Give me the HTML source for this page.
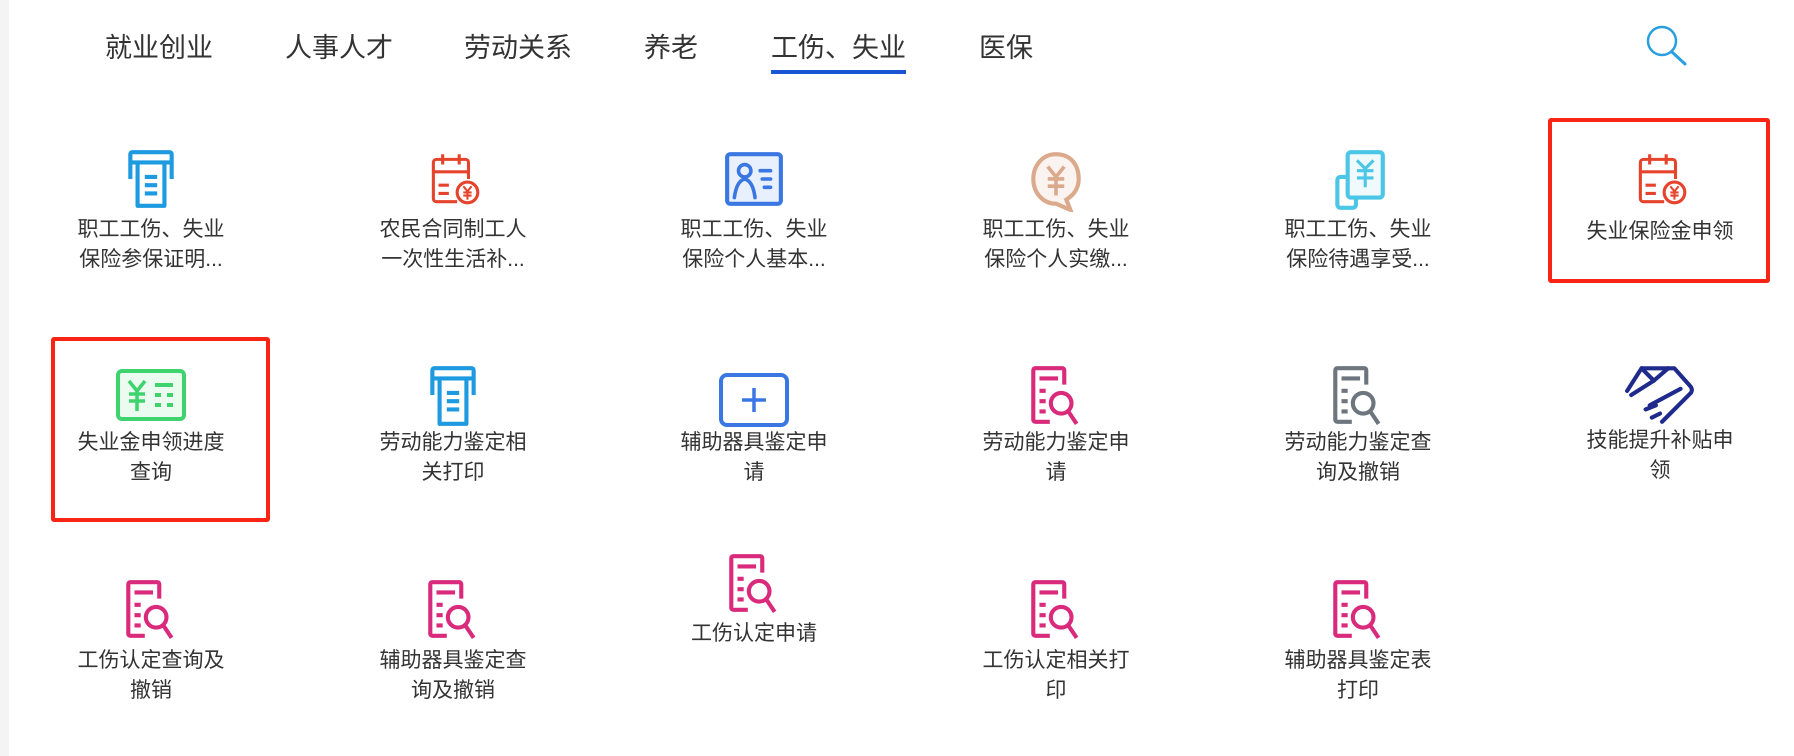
<!DOCTYPE html>
<html><head><meta charset="utf-8"><style>
*{margin:0;padding:0;box-sizing:border-box}
body{width:1794px;height:756px;background:#fff;position:relative;overflow:hidden;font-family:"Liberation Sans","Noto Sans CJK SC",sans-serif;color:#333}
.strip{position:absolute;left:0;top:0;width:9px;height:756px;background:#f4f4f4}
.nav{position:absolute;top:30px;font-size:27px;color:#333;line-height:36px;white-space:nowrap}
.ul{position:absolute;left:771px;top:70px;width:135px;height:4px;background:#1a55d6}
.it{position:absolute;width:300px;text-align:center}
.it svg{display:block;margin:0 auto}
.t{font-size:21px;line-height:30px;color:#333;margin-top:8px}
.box{position:absolute;border:4px solid #fa2414;border-radius:3px}
</style></head><body>
<div class="strip"></div>
<div class="nav" style="left:105px">就业创业</div>
<div class="nav" style="left:285px">人事人才</div>
<div class="nav" style="left:464px">劳动关系</div>
<div class="nav" style="left:644px">养老</div>
<div class="nav" style="left:771px">工伤、失业</div>
<div class="nav" style="left:979px">医保</div>
<div class="ul"></div>
<svg style="position:absolute;left:1645px;top:24px" width="44" height="42" viewBox="0 0 44 42"><circle cx="17" cy="17" r="14" fill="none" stroke="#2a9fe0" stroke-width="2.5"/><path d="M27 28 L40 40" stroke="#2a9fe0" stroke-width="3" stroke-linecap="round"/></svg>

<div class="box" style="left:1548px;top:118px;width:222px;height:165px"></div>
<div class="box" style="left:51px;top:337px;width:219px;height:185px"></div>

<!-- Row 1 -->
<div class="it" style="left:1px;top:148px">
<svg width="62" height="62" viewBox="0 0 60 60"><g fill="none" stroke="#1e9be0" stroke-width="4" stroke-linejoin="round"><path d="M10 30 V6 a2 2 0 0 1 2-2 H48 a2 2 0 0 1 2 2 V30"/><path d="M10 14 H50"/><path d="M17 14 V56 H43 V14"/><path d="M24 28H36M24 36H36M24 44H36"/></g></svg>
<div class="t" style="margin-top:5px">职工工伤、失业<br>保险参保证明...</div></div>

<div class="it" style="left:303px;top:148px">
<svg width="62" height="62" viewBox="0 0 60 60"><g fill="none" stroke="#e6432d" stroke-width="3"><path d="M34 52 H14 a3 3 0 0 1-3-3 V14 a3 3 0 0 1 3-3 H42 a3 3 0 0 1 3 3 V30"/><path d="M11 23 H45M20 6V16M36 6V16M16 36H26M16 44H26"/><circle cx="44" cy="43" r="10"/><path d="M40 37 L44 42 L48 37M44 42V50M40 43H48M40 46H48" stroke-width="2"/></g></svg>
<div class="t" style="margin-top:5px">农民合同制工人<br>一次性生活补...</div></div>

<div class="it" style="left:604px;top:148px">
<svg width="62" height="62" viewBox="0 0 60 60"><rect x="4" y="6" width="52" height="48" rx="3" fill="#e8f0fd" stroke="#3a77e3" stroke-width="4"/><g fill="none" stroke="#3a77e3" stroke-width="3.5" stroke-linecap="round"><circle cx="21" cy="22" r="6"/><path d="M11 48 Q13 32 21 30 Q29 32 31 48"/><path d="M36 22H46M38 30H46M40 38H46"/></g></svg>
<div class="t" style="margin-top:5px">职工工伤、失业<br>保险个人基本...</div></div>

<div class="it" style="left:906px;top:148px">
<svg width="62" height="64" viewBox="0 0 60 62"><path d="M30 6 C16 6 8 18 8 30 C8 44 18 54 30 54 L44 60 L40 50 C48 45 52 38 52 30 C52 16 44 6 30 6Z" fill="#fbf3ef" stroke="#dba98b" stroke-width="4"/><path d="M22 18 L30 28 L38 18M30 28V46M22 30H38M22 37H38" fill="none" stroke="#dba98b" stroke-width="3.5"/></svg>
<div class="t" style="margin-top:3px">职工工伤、失业<br>保险个人实缴...</div></div>

<div class="it" style="left:1208px;top:148px">
<svg width="62" height="64" viewBox="0 0 60 62"><g fill="none" stroke="#4cc6e6" stroke-width="4"><rect x="10" y="28" width="18" height="30" rx="3"/><rect x="20" y="4" width="34" height="44" rx="3" fill="#f0fafd"/><path d="M29 12 L37 20 L45 12M37 20V38M29 22H45M29 29H45" stroke-width="3"/></g></svg>
<div class="t" style="margin-top:3px">职工工伤、失业<br>保险待遇享受...</div></div>

<div class="it" style="left:1510px;top:148px">
<svg width="62" height="62" viewBox="0 0 60 60"><g fill="none" stroke="#e6432d" stroke-width="3"><path d="M34 52 H14 a3 3 0 0 1-3-3 V14 a3 3 0 0 1 3-3 H42 a3 3 0 0 1 3 3 V30"/><path d="M11 23 H45M20 6V16M36 6V16M16 36H26M16 44H26"/><circle cx="44" cy="43" r="10"/><path d="M40 37 L44 42 L48 37M44 42V50M40 43H48M40 46H48" stroke-width="2"/></g></svg>
<div class="t" style="margin-top:7px">失业保险金申领</div></div>

<!-- Row 2 -->
<div class="it" style="left:1px;top:366px">
<svg width="72" height="58" viewBox="0 0 72 56"><rect x="3" y="4" width="66" height="48" rx="4" fill="#ecfbf0" stroke="#3fd36f" stroke-width="4"/><path d="M14 14 L22 24 L30 14M22 24V44M14 27H30M14 34H30" fill="none" stroke="#3fd36f" stroke-width="3.5"/><path d="M40 18H58M40 28H46M52 28H58M40 38H46M52 38H58" stroke="#3fd36f" stroke-width="4"/></svg>
<div class="t" style="margin-top:4px">失业金申领进度<br>查询</div></div>

<div class="it" style="left:303px;top:364px">
<svg width="62" height="64" viewBox="0 0 60 62"><g fill="none" stroke="#1e9be0" stroke-width="4" stroke-linejoin="round"><path d="M10 30 V6 a2 2 0 0 1 2-2 H48 a2 2 0 0 1 2 2 V30"/><path d="M10 14 H50"/><path d="M17 14 V58 H43 V14"/><path d="M24 28H36M24 36H36M24 44H36"/></g></svg>
<div class="t" style="margin-top:0px">劳动能力鉴定相<br>关打印</div></div>

<div class="it" style="left:604px;top:372px">
<svg width="72" height="56" viewBox="0 0 72 56"><rect x="3" y="3" width="66" height="50" rx="6" fill="none" stroke="#3a77e3" stroke-width="4"/><path d="M36 16V40M24 28H48" stroke="#3a77e3" stroke-width="3.5"/></svg>
<div class="t" style="margin-top:0px">辅助器具鉴定申<br>请</div></div>

<div class="it" style="left:906px;top:364px">
<svg width="62" height="64" viewBox="0 0 60 62"><g fill="none" stroke="#d92a7b" stroke-width="4"><path d="M24 56 H10 a2 2 0 0 1-2-2 V6 a2 2 0 0 1 2-2 H36 a2 2 0 0 1 2 2 V20"/><path d="M14 14H32M14 26H20M14 36H20M14 46H20"/><circle cx="35" cy="38" r="10"/><path d="M42 46 L50 58"/></g></svg>
<div class="t" style="margin-top:0px">劳动能力鉴定申<br>请</div></div>

<div class="it" style="left:1208px;top:364px">
<svg width="62" height="64" viewBox="0 0 60 62"><g fill="none" stroke="#6d767f" stroke-width="4"><path d="M24 56 H10 a2 2 0 0 1-2-2 V6 a2 2 0 0 1 2-2 H36 a2 2 0 0 1 2 2 V20"/><path d="M14 14H32M14 26H20M14 36H20M14 46H20"/><circle cx="35" cy="38" r="10"/><path d="M42 46 L50 58"/></g></svg>
<div class="t" style="margin-top:0px">劳动能力鉴定查<br>询及撤销</div></div>

<div class="it" style="left:1510px;top:362px">
<svg width="74" height="64" viewBox="0 0 72 62"><g fill="none" stroke="#1e2b8c" stroke-width="4" stroke-linecap="round" stroke-linejoin="round"><path d="M4 28 L18 6 L50 6 L66 24 Q68 27 66 30 L38 58"/><path d="M18 6 L30 18 L44 6"/><path d="M30 18 L8 32 M56 26 L26 42 M22 46 L32 42 M28 54 L36 50"/></g></svg>
<div class="t" style="margin-top:0px">技能提升补贴申<br>领</div></div>

<!-- Row 3 -->
<div class="it" style="left:1px;top:578px">
<svg width="62" height="64" viewBox="0 0 60 62"><g fill="none" stroke="#d92a7b" stroke-width="4"><path d="M24 56 H10 a2 2 0 0 1-2-2 V6 a2 2 0 0 1 2-2 H36 a2 2 0 0 1 2 2 V20"/><path d="M14 14H32M14 26H20M14 36H20M14 46H20"/><circle cx="35" cy="38" r="10"/><path d="M42 46 L50 58"/></g></svg>
<div class="t" style="margin-top:4px">工伤认定查询及<br>撤销</div></div>

<div class="it" style="left:303px;top:578px">
<svg width="62" height="64" viewBox="0 0 60 62"><g fill="none" stroke="#d92a7b" stroke-width="4"><path d="M24 56 H10 a2 2 0 0 1-2-2 V6 a2 2 0 0 1 2-2 H36 a2 2 0 0 1 2 2 V20"/><path d="M14 14H32M14 26H20M14 36H20M14 46H20"/><circle cx="35" cy="38" r="10"/><path d="M42 46 L50 58"/></g></svg>
<div class="t" style="margin-top:4px">辅助器具鉴定查<br>询及撤销</div></div>

<div class="it" style="left:604px;top:552px">
<svg width="62" height="64" viewBox="0 0 60 62"><g fill="none" stroke="#d92a7b" stroke-width="4"><path d="M24 56 H10 a2 2 0 0 1-2-2 V6 a2 2 0 0 1 2-2 H36 a2 2 0 0 1 2 2 V20"/><path d="M14 14H32M14 26H20M14 36H20M14 46H20"/><circle cx="35" cy="38" r="10"/><path d="M42 46 L50 58"/></g></svg>
<div class="t" style="margin-top:3px">工伤认定申请</div></div>

<div class="it" style="left:906px;top:578px">
<svg width="62" height="64" viewBox="0 0 60 62"><g fill="none" stroke="#d92a7b" stroke-width="4"><path d="M24 56 H10 a2 2 0 0 1-2-2 V6 a2 2 0 0 1 2-2 H36 a2 2 0 0 1 2 2 V20"/><path d="M14 14H32M14 26H20M14 36H20M14 46H20"/><circle cx="35" cy="38" r="10"/><path d="M42 46 L50 58"/></g></svg>
<div class="t" style="margin-top:4px">工伤认定相关打<br>印</div></div>

<div class="it" style="left:1208px;top:578px">
<svg width="62" height="64" viewBox="0 0 60 62"><g fill="none" stroke="#d92a7b" stroke-width="4"><path d="M24 56 H10 a2 2 0 0 1-2-2 V6 a2 2 0 0 1 2-2 H36 a2 2 0 0 1 2 2 V20"/><path d="M14 14H32M14 26H20M14 36H20M14 46H20"/><circle cx="35" cy="38" r="10"/><path d="M42 46 L50 58"/></g></svg>
<div class="t" style="margin-top:4px">辅助器具鉴定表<br>打印</div></div>
</body></html>
